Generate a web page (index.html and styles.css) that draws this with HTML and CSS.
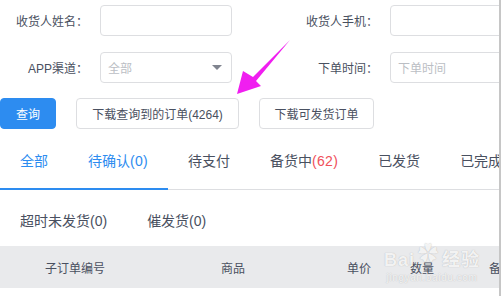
FILE: index.html
```html
<!DOCTYPE html>
<html lang="zh-CN">

<head>
  <meta charset="UTF-8" />
  <title>订单管理</title>
  <link rel="stylesheet" href="styles.css">
</head>

<body>
  <div class="page">
    <form class="filters">
      <div class="form-row">
        <div class="form-item">
          <label class="form-label">收货人姓名：</label>
          <div class="input"></div>
        </div>
        <div class="form-item">
          <label class="form-label">收货人手机：</label>
          <div class="input wide"></div>
        </div>
      </div>
      <div class="form-row">
        <div class="form-item">
          <label class="form-label">APP渠道：</label>
          <div class="input select">
            <span class="placeholder">全部</span>
            <span class="caret"></span>
          </div>
        </div>
        <div class="form-item">
          <label class="form-label">下单时间：</label>
          <div class="input wide"><span class="placeholder">下单时间</span></div>
        </div>
      </div>
    </form>

    <div class="actions">
      <button type="button" class="btn btn-primary">查询</button>
      <button type="button" class="btn btn-export">下载查询到的订单(4264)</button>
      <button type="button" class="btn btn-ship">下载可发货订单</button>
    </div>

    <div class="tabs">
      <span class="tab active">全部</span>
      <span class="tab active">待确认<span class="num">(0)</span></span>
      <span class="tab">待支付</span>
      <span class="tab">备货中<em class="num count">(62)</em></span>
      <span class="tab">已发货</span>
      <span class="tab">已完成</span>
      <div class="ink-bar"></div>
    </div>

    <div class="subtabs">
      <span class="subtab">超时未发货(0)</span>
      <span class="subtab">催发货(0)</span>
    </div>

    <div class="table-head">
      <span class="th">子订单编号</span>
      <span class="th">商品</span>
      <span class="th">单价</span>
      <span class="th">数量</span>
      <span class="th th-left">备注</span>
    </div>

    <!-- annotation arrow -->
    <svg class="arrow" width="60" height="60" viewBox="232 38 60 60">
      <polygon points="290,40 253,77 243,71 237,94 261,86 256,81" fill="#f01ef0" />
    </svg>

    <div class="watermark">
      <span class="wm-main">Bai<span class="paw">&#10047;</span>经验</span>
      <span class="wm-sub">jingyan.baidu.com</span>
    </div>
  </div>
</body>

</html>
```

FILE: styles.css
```css
* {
  margin: 0;
  padding: 0;
  box-sizing: border-box;
}

body {
  font-family: 'Liberation Sans', 'Noto Sans CJK SC', sans-serif;
  background-color: #fff;
  color: #495060;
  overflow: hidden;
}

.page {
  position: relative;
  width: 501px;
  height: 296px;
  overflow: hidden;
  border-right: 2px solid #c6c6c6;
}

.filters {
  padding-top: 5px;
}

.form-row {
  display: flex;
  margin-bottom: 16px;
}

.form-row:last-child {
  margin-bottom: 0;
}

.form-item {
  display: flex;
  align-items: center;
  width: 290px;
  flex-shrink: 0;
}

.form-label {
  width: 88px;
  margin-right: 12px;
  text-align: right;
  font-size: 12px;
  color: #495060;
}

.input {
  width: 132px;
  height: 31px;
  border: 1px solid #dddee1;
  border-radius: 4px;
  padding: 0 7px;
  display: flex;
  align-items: center;
  font-size: 12px;
  flex-shrink: 0;
}

.input.wide {
  width: 160px;
}

.placeholder {
  color: #bbbec4;
}

.select {
  justify-content: space-between;
  padding-right: 9px;
}

.caret {
  width: 0;
  height: 0;
  border-left: 5px solid transparent;
  border-right: 5px solid transparent;
  border-top: 5px solid #80848f;
}

.actions {
  display: flex;
  gap: 20px;
  margin-top: 15px;
}

.btn {
  height: 31px;
  padding: 0;
  border: 1px solid #dddee1;
  border-radius: 4px;
  background-color: #fff;
  color: #495060;
  font-family: inherit;
  font-size: 12px;
}

.btn-primary {
  width: 56px;
  background-color: #2d8cf0;
  border-color: #2d8cf0;
  color: #fff;
}

.btn-export {
  width: 163px;
}

.btn-ship {
  width: 115px;
}

.tabs {
  position: relative;
  display: flex;
  height: 51px;
  margin-top: 10px;
  padding-top: 12px;
  border-bottom: 1px solid #dddee1;
  white-space: nowrap;
}

.tab {
  padding: 0 20px;
  font-size: 14px;
  line-height: 20px;
  color: #495060;
}

.tab.active {
  color: #2d8cf0;
}

.num {
  letter-spacing: 0.3px;
}

.count {
  font-style: normal;
  color: #f0505a;
}

.ink-bar {
  position: absolute;
  left: 0;
  bottom: -1px;
  width: 168px;
  height: 2px;
  background-color: #2d8cf0;
}

.subtabs {
  display: flex;
  margin-top: 21px;
}

.subtab {
  padding: 0 20px;
  font-size: 14px;
  line-height: 20px;
  color: #495060;
}

.table-head {
  display: grid;
  grid-template-columns: 150px 166px 86px 40px 1fr;
  align-items: center;
  height: 42px;
  margin-top: 15px;
  background-color: #e9eaec;
  font-size: 12px;
  white-space: nowrap;
}

.th {
  text-align: center;
}

.th-left {
  text-align: left;
  padding-left: 47px;
}

.arrow {
  position: absolute;
  left: 232px;
  top: 38px;
}

.watermark {
  position: absolute;
  left: 384px;
  top: 248px;
  display: flex;
  flex-direction: column;
  align-items: center;
  color: rgba(255, 255, 255, 0.85);
  text-shadow: 0 0 1px rgba(120, 120, 120, 0.55);
  pointer-events: none;
}

.wm-main {
  display: flex;
  align-items: flex-start;
  font-size: 18px;
  font-weight: 700;
  line-height: 24px;
  letter-spacing: 1px;
}

.paw {
  font-size: 20px;
  line-height: 18px;
  margin: -3px 3px 0;
}

.wm-sub {
  font-size: 10px;
  line-height: 12px;
  letter-spacing: 0.6px;
}
```
